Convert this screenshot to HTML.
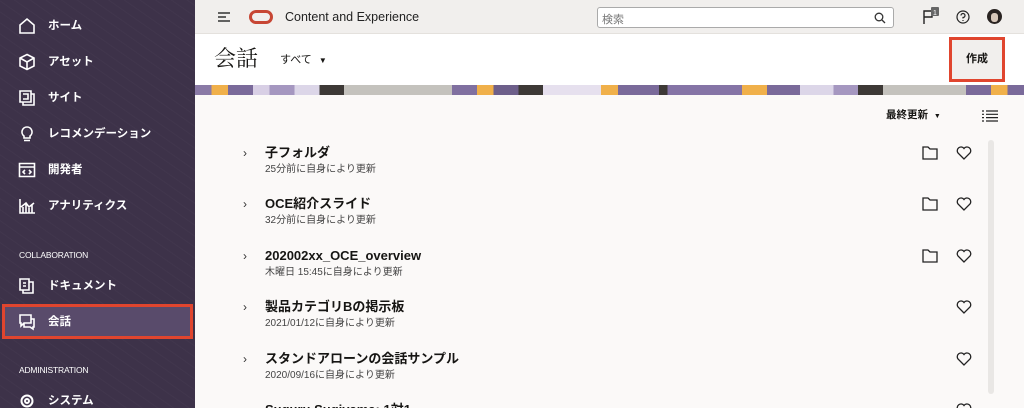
<!DOCTYPE html>
<html style="width:1024px;height:408px;overflow:hidden"><head><meta charset="utf-8">
<style>
*{box-sizing:border-box;margin:0;padding:0}
body{width:1024px;height:408px;overflow:hidden;font-family:"Liberation Sans","Noto Sans CJK JP",sans-serif;background:#fbf9f8;position:relative;color:#161513}
.side{position:absolute;left:0;top:0;width:195px;height:408px;background:#3d3249;
background-image:repeating-linear-gradient(35deg,rgba(255,255,255,.02) 0 1px,transparent 1px 9px)}
.nav{position:absolute;left:0;width:195px;height:36px;color:#fff;font-size:11.5px;font-weight:bold;display:flex;align-items:center}
.nav svg{position:absolute;left:18px;width:18px;height:18px}
.nav span{position:absolute;left:48px;line-height:14px}
.sec{position:absolute;left:19px;color:#fff;font-size:8.5px;letter-spacing:-.2px}
.sel{position:absolute;left:2px;top:304px;width:191px;height:35px;border:3px solid #e0452e;background:#594b6b}
.top{position:absolute;left:195px;top:0;width:829px;height:34px;background:#f1efed;border-bottom:1px solid #e4e1dd}
.head{position:absolute;left:195px;top:34px;width:829px;height:51px;background:#fff}
.banner{position:absolute;left:195px;top:85px;width:829px;height:10px;
background:linear-gradient(90deg,#8a7aa6 0 2%,#f0b04a 2% 4%,#7a6a9a 4% 7%,#d8cfe5 7% 9%,#a597c0 9% 12%,#dcd6e8 12% 15%,#3d3936 15% 18%,#c4c2bd 18% 31%,#8070a0 31% 34%,#f0b04a 34% 36%,#6d5f8a 36% 39%,#3d3936 39% 42%,#e6e0ee 42% 49%,#f0b04a 49% 51%,#7a6a9a 51% 56%,#3d3936 56% 57%,#8574a6 57% 66%,#f0b04a 66% 69%,#7a6a9a 69% 73%,#dcd6e8 73% 77%,#a597c0 77% 80%,#3d3936 80% 83%,#c4c2bd 83% 93%,#7a6a9a 93% 96%,#f0b04a 96% 98%,#7a6a9a 98%)}
.row{position:absolute;left:195px;width:800px;height:40px}
.row .chev{position:absolute;left:48px;top:3px;font-size:12px;line-height:14px;color:#333}
.row .t{position:absolute;left:70px;top:2px;font-size:13px;line-height:16px;font-weight:bold;white-space:nowrap}
.row .s{position:absolute;left:70px;top:21px;font-size:10px;line-height:12px;color:#444;white-space:nowrap}
.fold{position:absolute;left:727px;top:3px}
.heart{position:absolute;left:761px;top:3px}
</style></head><body>
<div class="side">
 <div class="nav" style="top:8px"><svg viewBox="0 0 18 18" fill="none" stroke="#fff" stroke-width="1.6"><path d="M2 8L9 2L16 8V16H2Z"/></svg><span>ホーム</span></div>
 <div class="nav" style="top:44px"><svg viewBox="0 0 18 18" fill="none" stroke="#fff" stroke-width="1.6"><path d="M9 1.5L16 5V13L9 16.5L2 13V5Z M2 5L9 9L16 5 M9 9V16.5"/></svg><span>アセット</span></div>
 <div class="nav" style="top:80px"><svg viewBox="0 0 18 18" fill="none" stroke="#fff" stroke-width="1.6"><path d="M2 2H13V13H2Z M5 5H10V10H5 M13 5H16V16H5V13"/></svg><span>サイト</span></div>
 <div class="nav" style="top:116px"><svg viewBox="0 0 18 18" fill="none" stroke="#fff" stroke-width="1.6"><path d="M9 2A5 5 0 0 1 12 11V13H6V11A5 5 0 0 1 9 2Z M6 15.5H12"/></svg><span>レコメンデーション</span></div>
 <div class="nav" style="top:152px"><svg viewBox="0 0 18 18" fill="none" stroke="#fff" stroke-width="1.6"><path d="M1.5 2.5H16.5V15.5H1.5Z M1.5 6H16.5 M7 9L5 11L7 13 M11 9L13 11L11 13"/></svg><span>開発者</span></div>
 <div class="nav" style="top:188px"><svg viewBox="0 0 18 18" fill="none" stroke="#fff" stroke-width="1.6"><path d="M2 2V16H17 M5 16V10 M8 16V7 M11 16V11 M14 16V8 M3 10L8 6L11 10L16 6"/></svg><span>アナリティクス</span></div>
 <div class="sec" style="top:250px">COLLABORATION</div>
 <div class="nav" style="top:268px"><svg viewBox="0 0 18 18" fill="none" stroke="#fff" stroke-width="1.6"><path d="M2 2H11V13H2Z M5 6H8 M5 9H8 M11 5H15V16H5V13"/></svg><span>ドキュメント</span></div>
 <div class="sel"></div>
 <div class="nav" style="top:304px"><svg viewBox="0 0 18 18" fill="none" stroke="#fff" stroke-width="1.6"><path d="M2 2H13V10H6L3 13V10H2Z M13 6H16V14H15V16L12 14H6V10"/></svg><span>会話</span></div>
 <div class="sec" style="top:365px">ADMINISTRATION</div>
 <div class="nav" style="top:383px"><svg viewBox="0 0 18 18" fill="none" stroke="#fff" stroke-width="2"><circle cx="9" cy="9" r="5.5"/><circle cx="9" cy="9" r="2"/></svg><span>システム</span></div>
</div>
<div class="top">
 <svg style="position:absolute;left:22px;top:11px" width="14" height="12" viewBox="0 0 14 12" stroke="#333" stroke-width="1.5"><path d="M1 2H13 M1 6H9 M1 10H13"/></svg>
 <div style="position:absolute;left:54px;top:10px;width:24px;height:14px;border:3px solid #c74634;border-radius:7px"></div>
 <div style="position:absolute;left:90px;top:10px;font-size:12.5px;color:#222">Content and Experience</div>
 <div style="position:absolute;left:402px;top:7px;width:297px;height:21px;border:1px solid #aaa;border-radius:3px;background:#fff">
  <span style="position:absolute;left:4px;top:3px;font-size:11px;color:#777">検索</span>
  <svg style="position:absolute;right:7px;top:4px" width="12" height="12" viewBox="0 0 12 12" fill="none" stroke="#333" stroke-width="1.3"><circle cx="5" cy="5" r="3.8"/><path d="M8 8L11 11"/></svg>
 </div>
 <svg style="position:absolute;left:727px;top:7px" width="18" height="18" viewBox="0 0 18 18" fill="none" stroke="#222" stroke-width="1.4"><path d="M2 17V4H10V10H2"/><rect x="9" y="0" width="8" height="9" rx="1" fill="#666" stroke="none"/><text x="11" y="8" font-size="7" fill="#fff" stroke="none" font-family="Liberation Sans">1</text></svg>
 <svg style="position:absolute;left:761px;top:10px" width="14" height="14" viewBox="0 0 14 14" fill="none" stroke="#222" stroke-width="1.2"><circle cx="7" cy="7" r="6"/><path d="M5 5.5A2 2 0 1 1 7 7.5V8.5 M7 10V11"/></svg>
 <div style="position:absolute;left:792px;top:9px;width:15px;height:15px;border-radius:50%;background:#2a2422"><div style="position:absolute;left:4px;top:4px;width:7px;height:9px;border-radius:3px;background:#d8c8bb"></div></div>
</div>
<div class="head">
 <div style="position:absolute;left:19px;top:11px;font-size:22px;line-height:28px;font-family:'Liberation Serif','Noto Serif CJK SC',serif">会話</div>
 <div style="position:absolute;left:85px;top:19px;font-size:11px;line-height:14px">すべて <span style="font-size:8px;margin-left:4px">▼</span></div>
 <div style="position:absolute;left:754px;top:3px;width:56px;height:45px;border:3px solid #e0452e;background:#f1efed;font-size:11px;font-weight:bold;text-align:center;line-height:39px">作成</div>
</div>
<div class="banner"></div>
<div style="position:absolute;left:886px;top:108px;font-size:10.5px;line-height:14px;font-weight:bold">最終更新 <span style="font-size:7px;margin-left:3px">▼</span></div>
<svg style="position:absolute;left:982px;top:110px" width="16" height="12" viewBox="0 0 16 12" stroke="#222" stroke-width="1.2"><path d="M0 1H2 M4 1H16 M0 4.3H2 M4 4.3H16 M0 7.6H2 M4 7.6H16 M0 11H2 M4 11H16"/></svg>
<div style="position:absolute;left:988px;top:140px;width:6px;height:254px;border-radius:3px;background:#e9e7e5"></div>

<div class="row" style="top:143px"><span class="chev">›</span><div class="t">子フォルダ</div><div class="s">25分前に自身により更新</div>
<svg class="fold" width="16" height="14" viewBox="0 0 16 14" fill="none" stroke="#222" stroke-width="1.3"><path d="M1 1H6L8 3H15V13H1Z"/></svg>
<svg class="heart" width="16" height="14" viewBox="0 0 16 14" fill="none" stroke="#222" stroke-width="1.3"><path d="M8 13L2 7A3.3 3.3 0 0 1 8 2.5A3.3 3.3 0 0 1 14 7Z"/></svg></div>
<div class="row" style="top:194px"><span class="chev">›</span><div class="t">OCE紹介スライド</div><div class="s">32分前に自身により更新</div>
<svg class="fold" width="16" height="14" viewBox="0 0 16 14" fill="none" stroke="#222" stroke-width="1.3"><path d="M1 1H6L8 3H15V13H1Z"/></svg>
<svg class="heart" width="16" height="14" viewBox="0 0 16 14" fill="none" stroke="#222" stroke-width="1.3"><path d="M8 13L2 7A3.3 3.3 0 0 1 8 2.5A3.3 3.3 0 0 1 14 7Z"/></svg></div>
<div class="row" style="top:246px"><span class="chev">›</span><div class="t">202002xx_OCE_overview</div><div class="s">木曜日 15:45に自身により更新</div>
<svg class="fold" width="16" height="14" viewBox="0 0 16 14" fill="none" stroke="#222" stroke-width="1.3"><path d="M1 1H6L8 3H15V13H1Z"/></svg>
<svg class="heart" width="16" height="14" viewBox="0 0 16 14" fill="none" stroke="#222" stroke-width="1.3"><path d="M8 13L2 7A3.3 3.3 0 0 1 8 2.5A3.3 3.3 0 0 1 14 7Z"/></svg></div>
<div class="row" style="top:297px"><span class="chev">›</span><div class="t">製品カテゴリBの掲示板</div><div class="s">2021/01/12に自身により更新</div>
<svg class="heart" width="16" height="14" viewBox="0 0 16 14" fill="none" stroke="#222" stroke-width="1.3"><path d="M8 13L2 7A3.3 3.3 0 0 1 8 2.5A3.3 3.3 0 0 1 14 7Z"/></svg></div>
<div class="row" style="top:349px"><span class="chev">›</span><div class="t">スタンドアローンの会話サンプル</div><div class="s">2020/09/16に自身により更新</div>
<svg class="heart" width="16" height="14" viewBox="0 0 16 14" fill="none" stroke="#222" stroke-width="1.3"><path d="M8 13L2 7A3.3 3.3 0 0 1 8 2.5A3.3 3.3 0 0 1 14 7Z"/></svg></div>
<div class="row" style="top:400px;height:8px;overflow:hidden"><div class="t">Suguru Sugiyama: 1対1</div>
<svg class="heart" width="16" height="14" viewBox="0 0 16 14" fill="none" stroke="#222" stroke-width="1.3"><path d="M8 13L2 7A3.3 3.3 0 0 1 8 2.5A3.3 3.3 0 0 1 14 7Z"/></svg></div>
</body></html>
